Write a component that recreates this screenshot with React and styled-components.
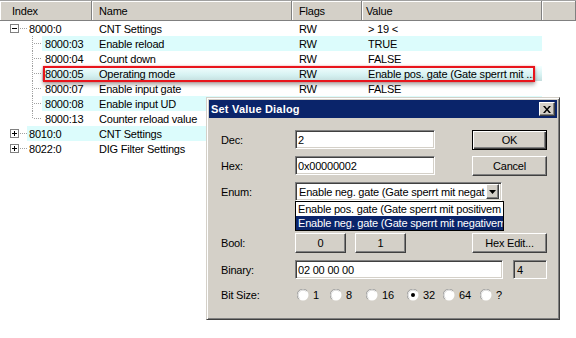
import React from 'react';
import styled, { createGlobalStyle } from 'styled-components';

const Global = createGlobalStyle`
  html, body { margin: 0; padding: 0; background: #fff; }
  body {
    font-family: "Liberation Sans", Arial, sans-serif;
    font-size: 11px;
    letter-spacing: -0.2px;
    color: #000;
  }
  * { box-sizing: border-box; }
`;

const Page = styled.div`
  position: relative;
  width: 576px;
  height: 338px;
  overflow: hidden;
  background: #fff;
`;

/* ---------- list view ---------- */
const Header = styled.div`
  display: flex;
  height: 21px;
  border-top: 1px solid #a0a0a0;
`;

const HeaderCell = styled.div`
  flex: ${p => (p.$w ? `0 0 ${p.$w}px` : '1 1 auto')};
  height: 20px;
  display: flex;
  align-items: center;
  padding-left: ${p => p.$pad ?? 7}px;
  background: #d4d0c8;
  border-right: 1px solid #808080;
  border-bottom: 1px solid #808080;
  box-shadow: inset 1px 1px #fff;
  white-space: nowrap;
`;

const Row = styled.div`
  display: flex;
  height: 15px;
`;

const Gutter = styled.svg`
  flex: 0 0 ${p => p.$w}px;
  display: block;
`;

const Band = styled.div`
  position: relative;
  display: flex;
  align-items: center;
  flex: 0 0 ${p => 542 - p.$start}px;
  background: ${p =>
    p.$selected
      ? 'linear-gradient(to bottom, #f4ffff 0%, #d6f2f2 60%, #c4dede 100%)'
      : p.$alt
      ? '#dcfcfc'
      : 'transparent'};
`;

const Cell = styled.div`
  flex: 0 0 ${p => p.$w}px;
  padding-left: ${p => p.$pad}px;
  white-space: nowrap;
  overflow: hidden;
`;

const RedFrame = styled.div`
  position: absolute;
  left: 1px;
  right: 7px;
  top: 0;
  bottom: -1px;
  border: 2px solid #e8141c;
  box-shadow: 0 3px 4px rgba(0, 0, 0, 0.3), 0 0 2px rgba(255, 60, 60, 0.5);
  pointer-events: none;
`;

/* ---------- dialog ---------- */
const Dialog = styled.div`
  position: absolute;
  left: 206px;
  top: 97px;
  width: 354px;
  height: 223px;
  background: #d4d0c8;
  border: 1px solid;
  border-color: #d4d0c8 #404040 #404040 #d4d0c8;
  box-shadow: inset 1px 1px #fff, inset -1px -1px #808080;
  padding: 2px;
  display: flex;
  flex-direction: column;
`;

const TitleBar = styled.div`
  height: 18px;
  flex: 0 0 18px;
  background: #0a246a;
  color: #fff;
  font-weight: bold;
  letter-spacing: 0.2px;
  display: flex;
  align-items: center;
  padding-left: 2px;
  padding-right: 2px;
`;

const TitleText = styled.span`
  flex: 1;
`;

const CloseButton = styled.div`
  width: 16px;
  height: 14px;
  background: #d4d0c8;
  border: 1px solid;
  border-color: #fff #404040 #404040 #fff;
  box-shadow: inset -1px -1px #808080;
  display: flex;
  align-items: center;
  justify-content: center;
`;

const Body = styled.div`
  display: flex;
  flex-direction: column;
  padding: 12px 10px 0 12px;
`;

const FieldRow = styled.div`
  position: relative;
  display: flex;
  align-items: center;
  height: ${p => p.$h || 20}px;
  margin-top: ${p => p.$mt || 0}px;
`;

const Label = styled.div`
  flex: 0 0 74px;
  white-space: nowrap;
`;

const Field = styled.div`
  position: relative;
  width: ${p => p.$w}px;
  height: 19px;
  align-self: flex-start;
  margin-left: ${p => (p.$right ? 'auto' : '0')};
  background: ${p => (p.$grey ? '#d4d0c8' : '#fff')};
  border: 1px solid;
  border-color: #808080 #fff #fff #808080;
  box-shadow: inset 1px 1px #404040, inset -1px -1px #d4d0c8;
  padding: 0 2px 0 ${p => (p.$grey ? 3 : 2)}px;
  display: flex;
  align-items: center;
  white-space: nowrap;
  overflow: hidden;
`;

const Button = styled.div`
  width: ${p => p.$w}px;
  height: 20px;
  align-self: flex-start;
  margin-left: ${p => (p.$right ? 'auto' : `${p.$ml || 0}px`)};
  background: #d4d0c8;
  border: 1px solid;
  border-color: ${p => (p.$default ? '#000' : '#fff #404040 #404040 #fff')};
  box-shadow: ${p =>
    p.$default
      ? 'inset 1px 1px #fff, inset -1px -1px #404040, inset -2px -2px #808080'
      : 'inset -1px -1px #808080'};
  display: flex;
  align-items: center;
  justify-content: center;
  white-space: nowrap;
`;

const Combo = styled.div`
  position: relative;
  width: 207px;
  height: 19px;
  align-self: flex-start;
  background: #fff;
  border: 1px solid;
  border-color: #808080 #fff #fff #808080;
  box-shadow: inset 1px 1px #404040, inset -1px -1px #d4d0c8;
  padding: 2px;
  display: flex;
  align-items: center;
`;

const ComboText = styled.div`
  flex: 1;
  white-space: nowrap;
  overflow: hidden;
  padding-left: 1px;
`;

const ComboArrow = styled.div`
  flex: 0 0 13px;
  height: 15px;
  background: #d4d0c8;
  border: 1px solid;
  border-color: #fff #404040 #404040 #fff;
  box-shadow: inset -1px -1px #808080;
  display: flex;
  align-items: center;
  justify-content: center;
`;

const DropList = styled.div`
  position: absolute;
  left: -1px;
  top: 18px;
  width: 209px;
  background: #fff;
  border: 1px solid #000;
  z-index: 2;
`;

const DropItem = styled.div`
  height: 14px;
  line-height: 14px;
  padding-left: 2px;
  white-space: nowrap;
  overflow: hidden;
  background: ${p => (p.$active ? '#0a246a' : '#fff')};
  color: ${p => (p.$active ? '#fff' : '#000')};
`;

const RadioGroup = styled.div`
  display: flex;
  align-items: center;
  margin-left: 2px;
`;

const RadioItem = styled.div`
  flex: 0 0 ${p => (p.$w ? `${p.$w}px` : 'auto')};
  display: flex;
  align-items: center;
  gap: 4px;
`;

/* ---------- drawings ---------- */
function TreeGutter({ level, exp, last }) {
  const w = level === 0 ? 27 : 42;
  return (
    <Gutter $w={w} width={w} height={15} viewBox={`0 0 ${w} 15`}>
      {level === 0 ? (
        <>
          <line x1="18" y1="7.5" x2="27" y2="7.5" stroke="#a0a0a0" strokeDasharray="1 1" />
          <rect x="10.5" y="3.5" width="8" height="8" fill="#fff" stroke="#808080" />
          <line x1="12" y1="7.5" x2="17" y2="7.5" stroke="#000" />
          {exp === 'plus' && <line x1="14.5" y1="5" x2="14.5" y2="10" stroke="#000" />}
        </>
      ) : (
        <>
          <line x1="32.5" y1="0" x2="32.5" y2={last ? 8 : 15} stroke="#a0a0a0" strokeDasharray="1 1" />
          <line x1="34" y1="7.5" x2="42" y2="7.5" stroke="#a0a0a0" strokeDasharray="1 1" />
        </>
      )}
    </Gutter>
  );
}

function Radio({ checked }) {
  return (
    <svg width="12" height="12" viewBox="0 0 12 12">
      <circle cx="6" cy="6" r="5.5" fill="#fff" />
      <path d="M1.8 10.2 A5.5 5.5 0 0 1 10.2 1.8" fill="none" stroke="#a0a0a0" />
      <path d="M2.6 9.4 A4.5 4.5 0 0 1 9.4 2.6" fill="none" stroke="#d8d8d8" />
      {checked && <circle cx="6" cy="6" r="2" fill="#000" />}
    </svg>
  );
}

const rows = [
  { level: 0, idx: '8000:0', name: 'CNT Settings', flags: 'RW', value: '> 19 <', exp: 'minus' },
  { level: 1, idx: '8000:03', name: 'Enable reload', flags: 'RW', value: 'TRUE' },
  { level: 1, idx: '8000:04', name: 'Count down', flags: 'RW', value: 'FALSE' },
  { level: 1, idx: '8000:05', name: 'Operating mode', flags: 'RW', value: 'Enable pos. gate (Gate sperrt mit ...', selected: true },
  { level: 1, idx: '8000:07', name: 'Enable input gate', flags: 'RW', value: 'FALSE' },
  { level: 1, idx: '8000:08', name: 'Enable input UD', flags: 'RW', value: 'FALSE' },
  { level: 1, idx: '8000:13', name: 'Counter reload value', flags: 'RW', value: '0x00000000 (0)', last: true },
  { level: 0, idx: '8010:0', name: 'CNT Settings', flags: '', value: '', exp: 'plus' },
  { level: 0, idx: '8022:0', name: 'DIG Filter Settings', flags: '', value: '', exp: 'plus' },
];

const bitSizes = [
  { label: '1', w: 33 },
  { label: '8', w: 36 },
  { label: '16', w: 41 },
  { label: '32', w: 36, checked: true },
  { label: '64', w: 37 },
  { label: '?' },
];

export default function App() {
  return (
    <Page>
      <Global />
      <Header>
        <HeaderCell $w={92} $pad={12}>Index</HeaderCell>
        <HeaderCell $w={200}>Name</HeaderCell>
        <HeaderCell $w={70}>Flags</HeaderCell>
        <HeaderCell $w={180} $pad={4}>Value</HeaderCell>
        <HeaderCell />
      </Header>
      {rows.map((r, i) => {
        const start = r.level === 0 ? 27 : 42;
        return (
          <Row key={r.idx}>
            <TreeGutter level={r.level} exp={r.exp} last={r.last} />
            <Band $start={start} $alt={i % 2 === 1} $selected={r.selected}>
              <Cell $w={92 - start} $pad={r.level === 0 ? 2 : 3}>{r.idx}</Cell>
              <Cell $w={200} $pad={7}>{r.name}</Cell>
              <Cell $w={70} $pad={7}>{r.flags}</Cell>
              <Cell $w={174} $pad={6}>{r.value}</Cell>
              {r.selected && <RedFrame />}
            </Band>
          </Row>
        );
      })}

      <Dialog>
        <TitleBar>
          <TitleText>Set Value Dialog</TitleText>
          <CloseButton>
            <svg width="8" height="7" viewBox="0 0 8 7">
              <path d="M0 0h2l2 2.5L6 0h2L5 3.5 8 7H6L4 4.5 2 7H0l3-3.5z" fill="#000" />
            </svg>
          </CloseButton>
        </TitleBar>
        <Body>
          <FieldRow>
            <Label>Dec:</Label>
            <Field $w={140}>2</Field>
            <Button $w={75} $right $default>OK</Button>
          </FieldRow>
          <FieldRow $mt={6}>
            <Label>Hex:</Label>
            <Field $w={140}>0x00000002</Field>
            <Button $w={75} $right>Cancel</Button>
          </FieldRow>
          <FieldRow $mt={6}>
            <Label>Enum:</Label>
            <Combo>
              <ComboText>Enable neg. gate (Gate sperrt mit negat</ComboText>
              <ComboArrow>
                <svg width="7" height="4" viewBox="0 0 7 4">
                  <path d="M0 0h7L3.5 4z" fill="#000" />
                </svg>
              </ComboArrow>
              <DropList>
                <DropItem>Enable pos. gate (Gate sperrt mit positivem</DropItem>
                <DropItem $active>Enable neg. gate (Gate sperrt mit negativem</DropItem>
              </DropList>
            </Combo>
          </FieldRow>
          <FieldRow $mt={31}>
            <Label>Bool:</Label>
            <Button $w={51}>0</Button>
            <Button $w={51} $ml={9}>1</Button>
            <Button $w={75} $right>Hex Edit...</Button>
          </FieldRow>
          <FieldRow $mt={7} $h={19}>
            <Label>Binary:</Label>
            <Field $w={208}>02 00 00 00</Field>
            <Field $w={34} $grey $right>4</Field>
          </FieldRow>
          <FieldRow $mt={7} $h={18}>
            <Label>Bit Size:</Label>
            <RadioGroup>
              {bitSizes.map(b => (
                <RadioItem key={b.label} $w={b.w}>
                  <Radio checked={b.checked} />
                  <span>{b.label}</span>
                </RadioItem>
              ))}
            </RadioGroup>
          </FieldRow>
        </Body>
      </Dialog>
    </Page>
  );
}
